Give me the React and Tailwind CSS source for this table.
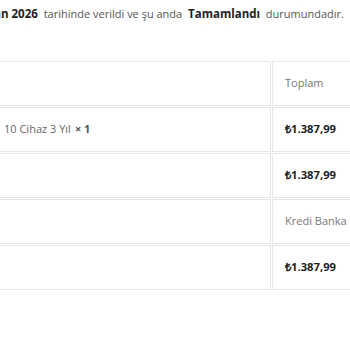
export default function App() {
  const rows = [
    { left: "", right: "Toplam", kind: "head" },
    { left: "10 Cihaz 3 Yıl", qty: "× 1", right: "₺1.387,99", kind: "amount" },
    { left: "", right: "₺1.387,99", kind: "amount" },
    { left: "", right: "Kredi Banka Kartı", kind: "text" },
    { left: "", right: "₺1.387,99", kind: "amount" },
  ];

  return (
    <div className="w-[350px] h-[350px] overflow-hidden bg-white font-['Open_Sans',sans-serif]">
      <div className="flex justify-end overflow-hidden whitespace-nowrap pt-[4px] pr-[6px] text-[11px] leading-[20px] text-[#555]">
        <p>
          Sipariş #10482,{" "}
          <mark className="bg-transparent text-[11.5px] font-bold text-[#222] px-[3px]">18 Nisan 2026</mark> tarihinde verildi ve şu anda{" "}
          <mark className="bg-transparent text-[11.5px] font-bold text-[#222] px-[3px]">Tamamlandı</mark> durumundadır.
        </p>
      </div>

      <div className="mt-[37px] -ml-[20px] grid grid-cols-[291px_120px] gap-[1px]">
        {rows.map((row, i) => (
          <div key={i} className="contents">
            <div className="h-[45px] border border-[#e6e6e6] flex items-center pl-[23px] text-[11px] text-[#666] whitespace-nowrap">
              {row.left}
              {row.qty && <strong className="ml-[4px] font-bold text-[#555]">{row.qty}</strong>}
            </div>
            <div
              className={
                row.kind === "amount"
                  ? "h-[45px] border border-[#e6e6e6] flex items-center pl-[12px] text-[11.25px] font-bold text-[#1e1e1e] whitespace-nowrap overflow-hidden"
                  : "h-[45px] border border-[#e6e6e6] flex items-center pl-[12px] text-[11px] text-[#777] whitespace-nowrap overflow-hidden"
              }
            >
              {row.right}
            </div>
          </div>
        ))}
      </div>
    </div>
  );
}
